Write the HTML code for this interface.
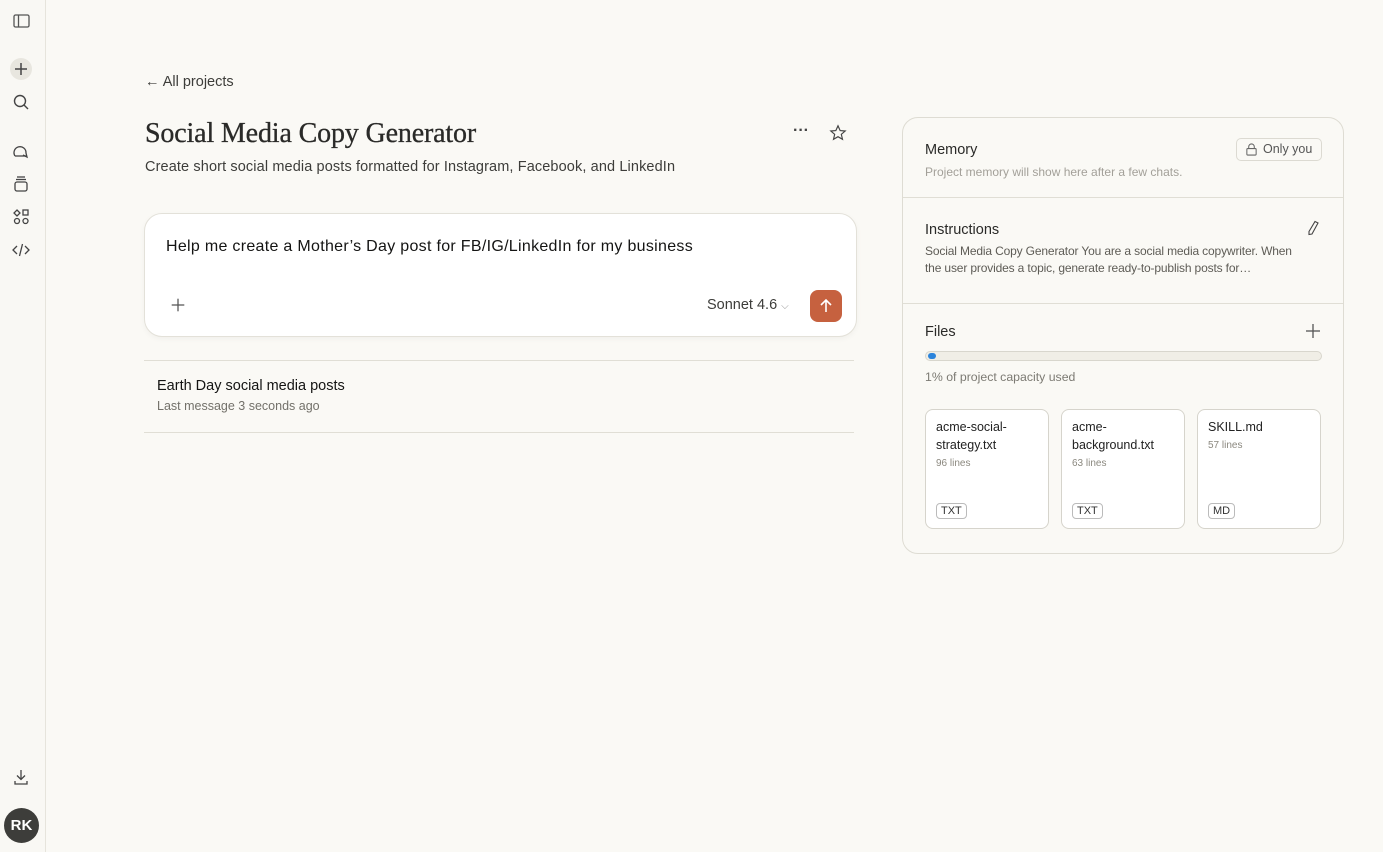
<!DOCTYPE html>
<html><head><meta charset="utf-8"><style>
*{box-sizing:border-box;margin:0;padding:0}
body{width:1383px;height:852px;background:#faf9f5;font-family:"Liberation Sans",sans-serif;color:#141413;position:relative;overflow:hidden}
.side{position:absolute;left:0;top:0;width:46px;height:852px;border-right:1px solid #e6e4dc;background:#f9f8f4}
.ic{position:absolute;left:11px;width:20px;height:20px}
.abs{position:absolute}
.muted{color:#8b887f}
.card{position:absolute;left:902px;top:117px;width:442px;height:437px;border:1px solid #dedcd3;border-radius:16px;background:#faf9f5}
.sec{position:absolute;left:0;width:100%;border-bottom:1px solid #e0ded5}
.file{position:absolute;top:409px;width:124px;height:120px;background:#fff;border:1px solid #d6d4cc;border-radius:8px;padding:8px 10px}
.file .n{font-size:12.5px;line-height:18px;color:#222}
.file .l{font-size:10px;color:#8b887f;margin-top:4px}
.tag{position:absolute;left:10px;bottom:9px;border:1px solid #bbb;border-radius:4px;font-size:11px;padding:1px 4px;color:#333}
</style></head><body>
<div class="side">
<svg class="ic" style="top:11px" viewBox="0 0 20 20" fill="none" stroke="#555" stroke-width="1.3"><rect x="3" y="4" width="15" height="12" rx="1.5"/><line x1="7.5" y1="4" x2="7.5" y2="16"/></svg>
<div class="abs" style="left:10px;top:58px;width:22px;height:22px;border-radius:50%;background:#e8e6df"></div>
<svg class="ic" style="top:59px" viewBox="0 0 20 20" stroke="#444" stroke-width="1.5"><line x1="10" y1="4" x2="10" y2="16"/><line x1="4" y1="10" x2="16" y2="10"/></svg>
<svg class="ic" style="top:92px" viewBox="0 0 20 20" fill="none" stroke="#444" stroke-width="1.4"><circle cx="9" cy="9" r="5.5"/><line x1="13" y1="13" x2="17" y2="17"/></svg>
<svg class="ic" style="top:141px" viewBox="0 0 20 20" fill="none" stroke="#444" stroke-width="1.3"><path d="M4 15 A6 6 0 1 1 15 12 L16 16 L12 14"/><path d="M4 15 H15"/></svg>
<svg class="ic" style="top:174px" viewBox="0 0 20 20" fill="none" stroke="#444" stroke-width="1.3"><rect x="4" y="8" width="12" height="9" rx="2"/><line x1="5" y1="5.5" x2="15" y2="5.5"/><line x1="6" y1="3" x2="14" y2="3"/></svg>
<svg class="ic" style="top:207px" viewBox="0 0 20 20" fill="none" stroke="#444" stroke-width="1.3"><path d="M6 3 L9 6 L6 9 L3 6Z"/><rect x="12" y="3" width="5" height="5"/><circle cx="6" cy="14" r="2.5"/><circle cx="14.5" cy="14" r="2.5"/></svg>
<svg class="ic" style="top:240px" viewBox="0 0 20 20" fill="none" stroke="#444" stroke-width="1.3"><path d="M6 6 L2 10 L6 14 M14 6 L18 10 L14 14 M11.5 4 L8.5 16"/></svg>
<svg class="ic" style="top:767px" viewBox="0 0 20 20" fill="none" stroke="#444" stroke-width="1.3"><path d="M10 3 V12 M6 8.5 L10 12.5 L14 8.5 M4 14 V17 H16 V14"/></svg>
<div class="abs" style="left:4px;top:808px;width:35px;height:35px;border-radius:50%;background:#3d3d3a;color:#fff;font-size:15px;font-weight:bold;text-align:center;line-height:35px">RK</div>
</div>

<div class="abs" style="left:145px;top:74px;font-size:14.5px;color:#3d3d3a">← All projects</div>
<div class="abs" style="left:145px;top:118px;font-family:'Liberation Serif',serif;font-size:28px;color:#2a2a28;letter-spacing:-0.15px;-webkit-text-stroke:0.3px #2a2a28">Social Media Copy Generator</div>
<div class="abs" style="left:793px;top:122px;font-size:16px;font-weight:bold;color:#444">···</div>
<svg class="abs" style="left:829px;top:124px" width="18" height="18" viewBox="0 0 20 20" fill="none" stroke="#444" stroke-width="1.3"><path d="M10 2 L12.4 7.3 L18 7.8 L13.7 11.5 L15 17 L10 14.1 L5 17 L6.3 11.5 L2 7.8 L7.6 7.3Z"/></svg>
<div class="abs" style="left:145px;top:159px;font-size:14.5px;color:#3d3d3a;letter-spacing:0.12px">Create short social media posts formatted for Instagram, Facebook, and LinkedIn</div>

<div class="abs" style="left:144px;top:213px;width:713px;height:124px;background:#fff;border:1px solid #e3e1d9;border-radius:18px;box-shadow:0 2px 6px rgba(0,0,0,.04)">
<div class="abs" style="left:21px;top:24px;font-size:16px;color:#141413;letter-spacing:0.3px">Help me create a Mother’s Day post for FB/IG/LinkedIn for my business</div>
<svg class="abs" style="left:24px;top:82px" width="18" height="18" viewBox="0 0 20 20" stroke="#555" stroke-width="1.4"><line x1="10" y1="3" x2="10" y2="17"/><line x1="3" y1="10" x2="17" y2="10"/></svg>
<div class="abs" style="left:562px;top:83px;font-size:14.5px;color:#3d3d3a">Sonnet 4.6 <span style="font-size:10px;color:#999">⌵</span></div>
<div class="abs" style="left:665px;top:76px;width:32px;height:32px;border-radius:8px;background:#c6613f"><svg width="32" height="32" viewBox="0 0 32 32" fill="none" stroke="#fff" stroke-width="1.6"><path d="M16 22 V10 M11 15 L16 10 L21 15"/></svg></div>
</div>

<div class="abs" style="left:144px;top:360px;width:710px;height:73px;border-top:1px solid #e0ded5;border-bottom:1px solid #e0ded5">
<div class="abs" style="left:13px;top:17px;font-size:14.5px;color:#141413">Earth Day social media posts</div>
<div class="abs muted" style="left:13px;top:38px;font-size:12.5px;color:#73716a">Last message 3 seconds ago</div>
</div>

<div class="card">
<div class="sec" style="top:0;height:80px">
<div class="abs" style="left:22px;top:24px;font-size:14.5px;color:#2a2a28">Memory</div>
<div class="abs muted" style="left:22px;top:47px;font-size:12px;color:#a3a099">Project memory will show here after a few chats.</div>
<div class="abs" style="left:333px;top:20px;width:86px;height:23px;border:1px solid #dcdad2;border-radius:5px;font-size:12.5px;color:#555;padding:3px 0 0 26px">Only you
<svg class="abs" style="left:8px;top:4px" width="13" height="13" viewBox="0 0 14 14" fill="none" stroke="#666" stroke-width="1.1"><rect x="2" y="6" width="10" height="7" rx="1"/><path d="M4 6 V4 A3 3 0 0 1 10 4 V6"/></svg></div>
</div>
<div class="sec" style="top:80px;height:106px">
<div class="abs" style="left:22px;top:24px;font-size:14.5px;color:#2a2a28">Instructions</div>
<svg class="abs" style="left:403px;top:22px" width="14" height="16" viewBox="0 0 14 16" fill="none" stroke="#444" stroke-width="1.1"><path d="M9 1.5 L12 3 L6 14 L3 14.5 L3 11.5Z"/></svg>
<div class="abs" style="left:22px;top:45px;width:398px;font-size:12px;line-height:17px;color:#5e5c56;letter-spacing:-0.15px">Social Media Copy Generator You are a social media copywriter. When<br>the user provides a topic, generate ready-to-publish posts for…</div>
</div>
<div class="abs" style="left:22px;top:206px;font-size:14.5px;color:#2a2a28">Files</div>
<svg class="abs" style="left:402px;top:205px" width="16" height="16" viewBox="0 0 16 16" stroke="#555" stroke-width="1.3"><line x1="8" y1="1" x2="8" y2="15"/><line x1="1" y1="8" x2="15" y2="8"/></svg>
<div class="abs" style="left:22px;top:233px;width:397px;height:10px;border:1px solid #d8d6cd;border-radius:5px;background:#f0eee6"><div style="margin:1px 0 0 2px;width:8px;height:6px;border-radius:3px;background:#2c84db"></div></div>
<div class="abs" style="left:22px;top:252px;font-size:12.3px;color:#7c7a73">1% of project capacity used</div>
</div>
<div class="file" style="left:925px"><div class="n">acme-social-<br>strategy.txt</div><div class="l">96 lines</div><span class="tag">TXT</span></div>
<div class="file" style="left:1061px"><div class="n">acme-<br>background.txt</div><div class="l">63 lines</div><span class="tag">TXT</span></div>
<div class="file" style="left:1197px"><div class="n">SKILL.md</div><div class="l">57 lines</div><span class="tag">MD</span></div>
</body></html>
